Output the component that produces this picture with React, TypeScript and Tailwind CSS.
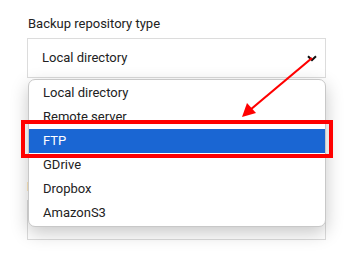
import React from "react";

const options = ["Local directory", "Remote server", "FTP", "GDrive", "Dropbox", "AmazonS3"];

export default function App() {
  const active = "FTP";

  return (
    <div className="relative w-[361px] h-[261px] overflow-hidden bg-white font-['Roboto',sans-serif] text-[13px] text-[#222]">
      <div className="pl-[27px] pr-[35px] pt-[15px]">
        <label className="block h-[23px] leading-[18px] pl-px">Backup repository type</label>
        <div className="relative">
          <div className="flex h-[40px] items-center border border-[#dcdcdc] pl-[14px] pr-[5px]">
            <span className="flex-1">Local directory</span>
            <svg width="10" height="7" viewBox="0 0 10 7" className="mr-[3px]">
              <path d="M1 1.2 L5 5 L9 1.2" fill="none" stroke="#111" strokeWidth="2" />
            </svg>
          </div>

          <ul className="absolute left-px right-0 top-[41px] z-10 rounded-[7px] border border-[#c8c8c8] bg-white py-px shadow-[0_6px_18px_rgba(0,0,0,0.22)]">
            {options.map((o) => (
              <li
                key={o}
                className={
                  o === active
                    ? "h-[24px] leading-[24px] pl-[14px] bg-[#1a66d3] text-white"
                    : "h-[24px] leading-[24px] pl-[14px]"
                }
              >
                {o}
              </li>
            ))}
          </ul>
        </div>

        <div className="mt-[100px]">
          <label className="block h-[22px] leading-[18px]">Backup type</label>
          <div className="flex h-[40px] items-center border border-[#dcdcdc] pl-[14px]">
            Increment without archiving
          </div>
        </div>
      </div>

      {/* highlight box around the FTP row */}
      <div className="absolute left-[21px] top-[120px] z-20 h-[38px] w-[312px] border-4 border-[#ff0000]" />

      <svg className="absolute left-0 top-0 z-20" width="361" height="261">
        <line x1="312" y1="58" x2="250" y2="110" stroke="#ff0000" strokeWidth="2.2" />
        <polygon points="242,117 247,103 256,113" fill="#ff0000" />
      </svg>
    </div>
  );
}
